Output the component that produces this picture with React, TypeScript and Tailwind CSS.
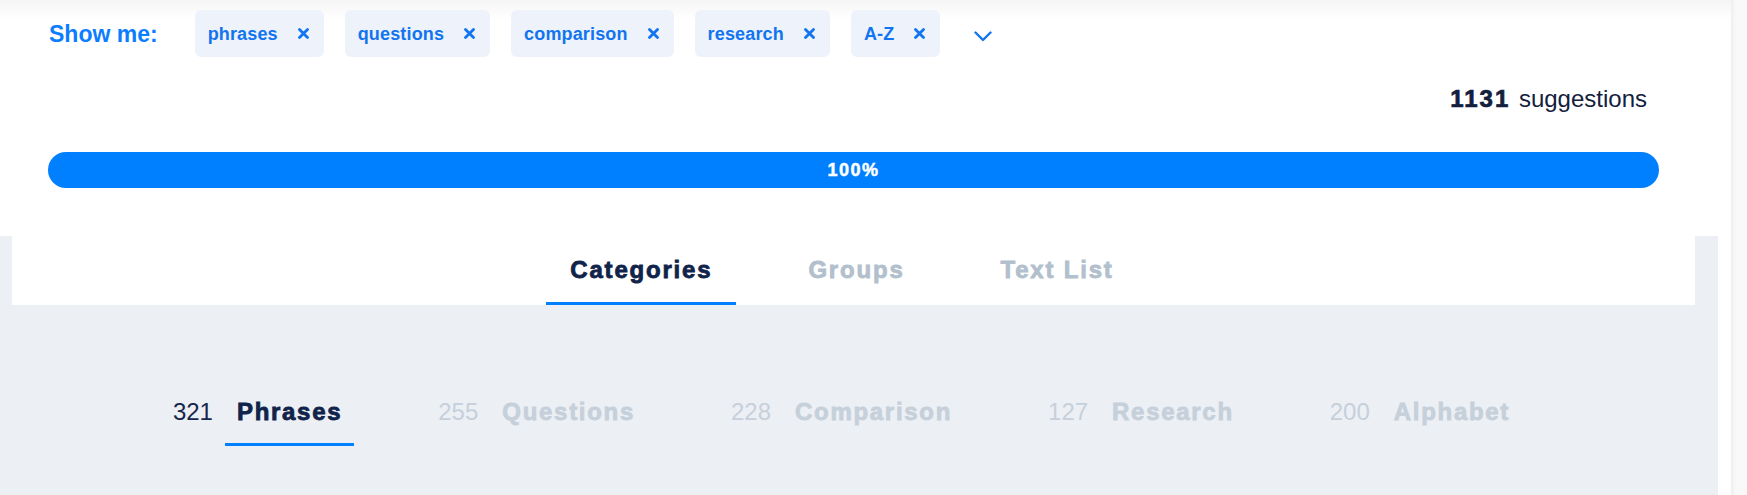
import React from 'react';

const chips = ['phrases', 'questions', 'comparison', 'research', 'A-Z'];

const tabs = [
  { label: 'Categories', active: true },
  { label: 'Groups', active: false },
  { label: 'Text List', active: false },
];

const categories = [
  { count: 321, label: 'Phrases', active: true },
  { count: 255, label: 'Questions', active: false },
  { count: 228, label: 'Comparison', active: false },
  { count: 127, label: 'Research', active: false },
  { count: 200, label: 'Alphabet', active: false },
];

function CloseIcon() {
  return (
    <svg width="11" height="11" viewBox="0 0 11 11" fill="none">
      <path d="M1.5 1.5L9.5 9.5M9.5 1.5L1.5 9.5" stroke="#1174f0" strokeWidth="2.8" strokeLinecap="round" />
    </svg>
  );
}

export default function App() {
  return (
    <div className="flex min-h-[495px] w-full font-['Liberation_Sans',Arial,sans-serif]">
      <div className="flex w-[1731px] shrink-0 flex-col bg-[linear-gradient(to_bottom,#f5f5f6_0px,#ffffff_20px)]">
        {/* Filter chips */}
        <div className="flex items-center pt-[10px] pl-[49px]">
          <span className="mr-[37px] text-[23px] font-bold leading-7 text-[#0b7dff]">Show me:</span>
          <div className="flex items-center gap-[21px]">
            {chips.map((chip) => (
              <div
                key={chip}
                className="flex h-[47px] items-center gap-5 rounded-md bg-[#eef2fa] pr-[15px] pl-[13px] text-[18px] font-bold leading-none tracking-[0.15px] text-[#1174f0]"
              >
                <span>{chip}</span>
                <CloseIcon />
              </div>
            ))}
            <svg className="mt-[5px] ml-[13px]" width="18" height="11" viewBox="0 0 18 11" fill="none">
              <path d="M1.5 1.5L9 9L16.5 1.5" stroke="#1174f0" strokeWidth="2.4" strokeLinecap="round" strokeLinejoin="round" />
            </svg>
          </div>
        </div>

        {/* Suggestions count */}
        <div className="mt-[28px] flex justify-end pr-[84px]">
          <p className="text-[24px] leading-7 text-[#13203d]">
            <span className="mr-[2px] font-bold tracking-[2px] [-webkit-text-stroke:0.7px_currentColor]">1131</span>{' '}
            suggestions
          </p>
        </div>

        {/* Progress */}
        <div className="mt-[39px] ml-[48px] flex h-[36px] w-[1611px] items-center justify-center rounded-full bg-[#007fff]">
          <span className="text-[18px] font-bold tracking-[1.5px] text-white [-webkit-text-stroke:0.5px_currentColor]">100%</span>
        </div>

        {/* Tabs area */}
        <div className="mt-[48px] flex w-[1718px] flex-1 flex-col bg-[#eceff4] pr-[23px] pl-[12px]">
          <div className="flex h-[69px] justify-center gap-12 bg-white pr-[23px]">
            {tabs.map((tab) => (
              <div
                key={tab.label}
                className={
                  tab.active
                    ? 'border-b-[3px] border-[#007fff] px-6 pt-[20px] pb-[18px] text-[24px] font-bold leading-7 tracking-[1.8px] text-[#10234a] [-webkit-text-stroke:0.8px_currentColor]'
                    : 'border-b-[3px] border-transparent px-6 pt-[20px] pb-[18px] text-[24px] font-bold leading-7 tracking-[1.8px] text-[#b2bfcc] [-webkit-text-stroke:0.8px_currentColor]'
                }
              >
                {tab.label}
              </div>
            ))}
          </div>

          <div className="mt-[93px] flex justify-center gap-[84px] pr-[12px]">
            {categories.map((cat) => (
              <div key={cat.label} className="flex items-start gap-3">
                <span className={cat.active ? 'text-[24px] leading-7 text-[#17264a]' : 'text-[24px] leading-7 text-[#c6d0db]'}>
                  {cat.count}
                </span>
                <span
                  className={
                    cat.active
                      ? 'border-b-[3px] border-[#007fff] px-3 pb-[17px] text-[24px] font-bold leading-7 tracking-[1.7px] text-[#10234a] [-webkit-text-stroke:0.8px_currentColor]'
                      : 'border-b-[3px] border-transparent px-3 pb-[17px] text-[24px] font-bold leading-7 tracking-[1.7px] text-[#c6d0db] [-webkit-text-stroke:0.8px_currentColor]'
                  }
                >
                  {cat.label}
                </span>
              </div>
            ))}
          </div>
        </div>
      </div>
      <div className="flex-1 bg-[linear-gradient(to_right,#eeeef0,#f8f8f9_4px,#f9f9fa)]" />
    </div>
  );
}
